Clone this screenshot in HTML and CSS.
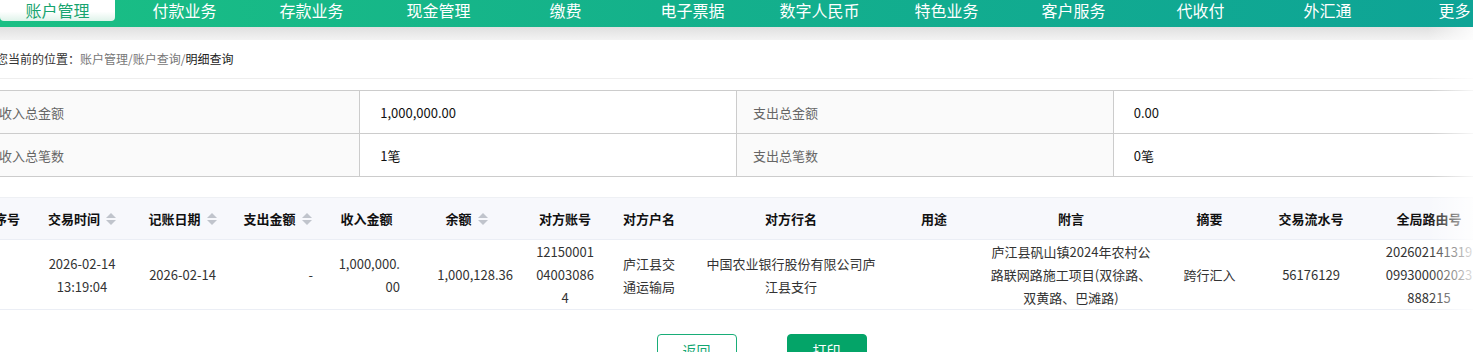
FILE: index.html
```html
<!DOCTYPE html>
<html lang="zh-CN">
<head>
    <meta charset="UTF-8">
    <meta name="viewport" content="width=device-width, initial-scale=1.0">
    <title>明细查询</title>
    <link rel="stylesheet" href="styles.css">
</head>
<body>
<div class="topnav">
    <a class="nav-item active">账户管理</a>
    <a class="nav-item">付款业务</a>
    <a class="nav-item">存款业务</a>
    <a class="nav-item">现金管理</a>
    <a class="nav-item">缴费</a>
    <a class="nav-item">电子票据</a>
    <a class="nav-item">数字人民币</a>
    <a class="nav-item">特色业务</a>
    <a class="nav-item">客户服务</a>
    <a class="nav-item">代收付</a>
    <a class="nav-item">外汇通</a>
    <a class="nav-item">更多</a>
</div>
<div class="nav-shadow"></div>

<div class="main">
    <div class="crumb">
        您当前的位置：<span class="crumb-link">账户管理/账户查询/</span><span class="crumb-cur">明细查询</span>
    </div>

    <table class="summary">
        <tr>
            <td class="label">收入总金额</td>
            <td class="value">1,000,000.00</td>
            <td class="label">支出总金额</td>
            <td class="value">0.00</td>
        </tr>
        <tr>
            <td class="label">收入总笔数</td>
            <td class="value">1笔</td>
            <td class="label">支出总笔数</td>
            <td class="value">0笔</td>
        </tr>
    </table>

    <table class="detail">
        <colgroup>
            <col style="width: 48px">
            <col style="width: 102px">
            <col style="width: 99px">
            <col style="width: 91px">
            <col style="width: 87px">
            <col style="width: 113px">
            <col style="width: 84px">
            <col style="width: 84px">
            <col style="width: 200px">
            <col style="width: 86px">
            <col style="width: 188px">
            <col style="width: 89px">
            <col style="width: 114px">
            <col style="width: 122px">
        </colgroup>
        <thead>
        <tr>
            <th>序号</th>
            <th>交易时间<span class="sort"></span></th>
            <th>记账日期<span class="sort"></span></th>
            <th>支出金额<span class="sort"></span></th>
            <th>收入金额</th>
            <th>余额<span class="sort"></span></th>
            <th>对方账号</th>
            <th>对方户名</th>
            <th>对方行名</th>
            <th>用途</th>
            <th>附言</th>
            <th>摘要</th>
            <th>交易流水号</th>
            <th>全局路由号</th>
        </tr>
        </thead>
        <tbody>
        <tr>
            <td></td>
            <td>2026-02-14 13:19:04</td>
            <td>2026-02-14</td>
            <td class="num">-</td>
            <td class="num">1,000,000.00</td>
            <td class="num">1,000,128.36</td>
            <td>12150001040030864</td>
            <td class="left">庐江县交通运输局</td>
            <td>中国农业银行股份有限公司庐江县支行</td>
            <td></td>
            <td>庐江县矾山镇2024年农村公路联网路施工项目(双徐路、双黄路、巴滩路)</td>
            <td>跨行汇入</td>
            <td>56176129</td>
            <td class="route">202602141319099300002023888215</td>
        </tr>
        </tbody>
    </table>

    <div class="actions">
        <button class="btn btn-plain">返回</button>
        <button class="btn btn-primary">打印</button>
    </div>
</div>

<div class="fade"></div>
</body>
</html>
```

FILE: styles.css
```css
body {
    margin: 0;
    font-family: "Noto Sans CJK SC", "Liberation Sans", sans-serif;
    color: #333;
    background: #fff;
    overflow: hidden;
}
.topnav {
    display: flex;
    gap: 12px;
    height: 27px;
    background: linear-gradient(to right, #1abf84, #14b18b 45%, #0ea496);
}
.nav-item {
    flex: 0 0 115px;
    height: 21px;
    line-height: 21px;
    text-align: center;
    font-size: 16px;
    color: #fff;
    white-space: nowrap;
}
.nav-item.active {
    color: #17a46f;
    background: linear-gradient(to bottom, #fff 55%, #dff3ea);
    border-radius: 0 0 4px 4px;
}
.nav-shadow {
    height: 13px;
    background: linear-gradient(to bottom, #e0e0e0, #f3f3f3);
}
.main {
    margin-left: -17px;
    width: 1507px;
}
.crumb {
    height: 38px;
    line-height: 38px;
    padding-left: 13px;
    font-size: 12px;
    color: #333;
    border-bottom: 1px solid #eee;
    margin-bottom: 11px;
}
.crumb-link {
    color: #777;
}
.crumb-cur {
    color: #222;
}
.summary {
    width: 100%;
    border-collapse: collapse;
    table-layout: fixed;
    font-size: 13px;
}
.summary td {
    height: 42px;
    border-top: 1px solid #ccc;
    border-bottom: 1px solid #ccc;
    padding: 0;
}
.summary td + td {
    border-left: 1px solid #ccc;
}
.summary .label {
    background: #fafafa;
    color: #666;
    padding-left: 16px;
}
.summary .value {
    color: #111;
    padding-left: 20px;
}
.detail {
    margin-top: 20px;
    width: 1507px;
    border-collapse: collapse;
    table-layout: fixed;
    font-size: 13px;
}
.detail th {
    height: 41px;
    background: #f7f8fc;
    border-top: 1px solid #eef0f4;
    border-bottom: 1px solid #ebeef5;
    font-weight: bold;
    color: #111;
    padding: 0 10px;
    white-space: nowrap;
}
.detail td {
    height: 69px;
    padding: 0 10px;
    text-align: center;
    line-height: 23px;
    overflow-wrap: anywhere;
    border-bottom: 1px solid #ebeef5;
    color: #333;
}
.detail td.num {
    text-align: right;
}
.detail td.route {
    padding: 0 17px;
}
.sort {
    display: inline-block;
    vertical-align: middle;
    position: relative;
    width: 10px;
    height: 14px;
    margin-left: 6px;
    margin-top: -2px;
}
.sort::before,
.sort::after {
    content: "";
    position: absolute;
    left: 0;
    border-left: 5px solid transparent;
    border-right: 5px solid transparent;
}
.sort::before {
    top: 1px;
    border-bottom: 5px solid #c0c4cc;
}
.sort::after {
    bottom: 1px;
    border-top: 5px solid #c0c4cc;
}
.actions {
    display: flex;
    justify-content: center;
    gap: 50px;
    padding-left: 50px;
    margin-top: 24px;
}
.btn {
    width: 80px;
    height: 32px;
    font-family: inherit;
    font-size: 14px;
    border-radius: 4px;
    cursor: pointer;
}
.btn-plain {
    background: #fff;
    color: #14a772;
    border: 1px solid #18ad78;
}
.btn-primary {
    background: #04a468;
    color: #fff;
    border: 1px solid #04a468;
}
.fade {
    position: absolute;
    top: 27px;
    right: 0;
    width: 45px;
    bottom: 0;
    background: linear-gradient(to right, rgba(255, 255, 255, 0), rgba(255, 255, 255, 0.85));
    pointer-events: none;
}
```
